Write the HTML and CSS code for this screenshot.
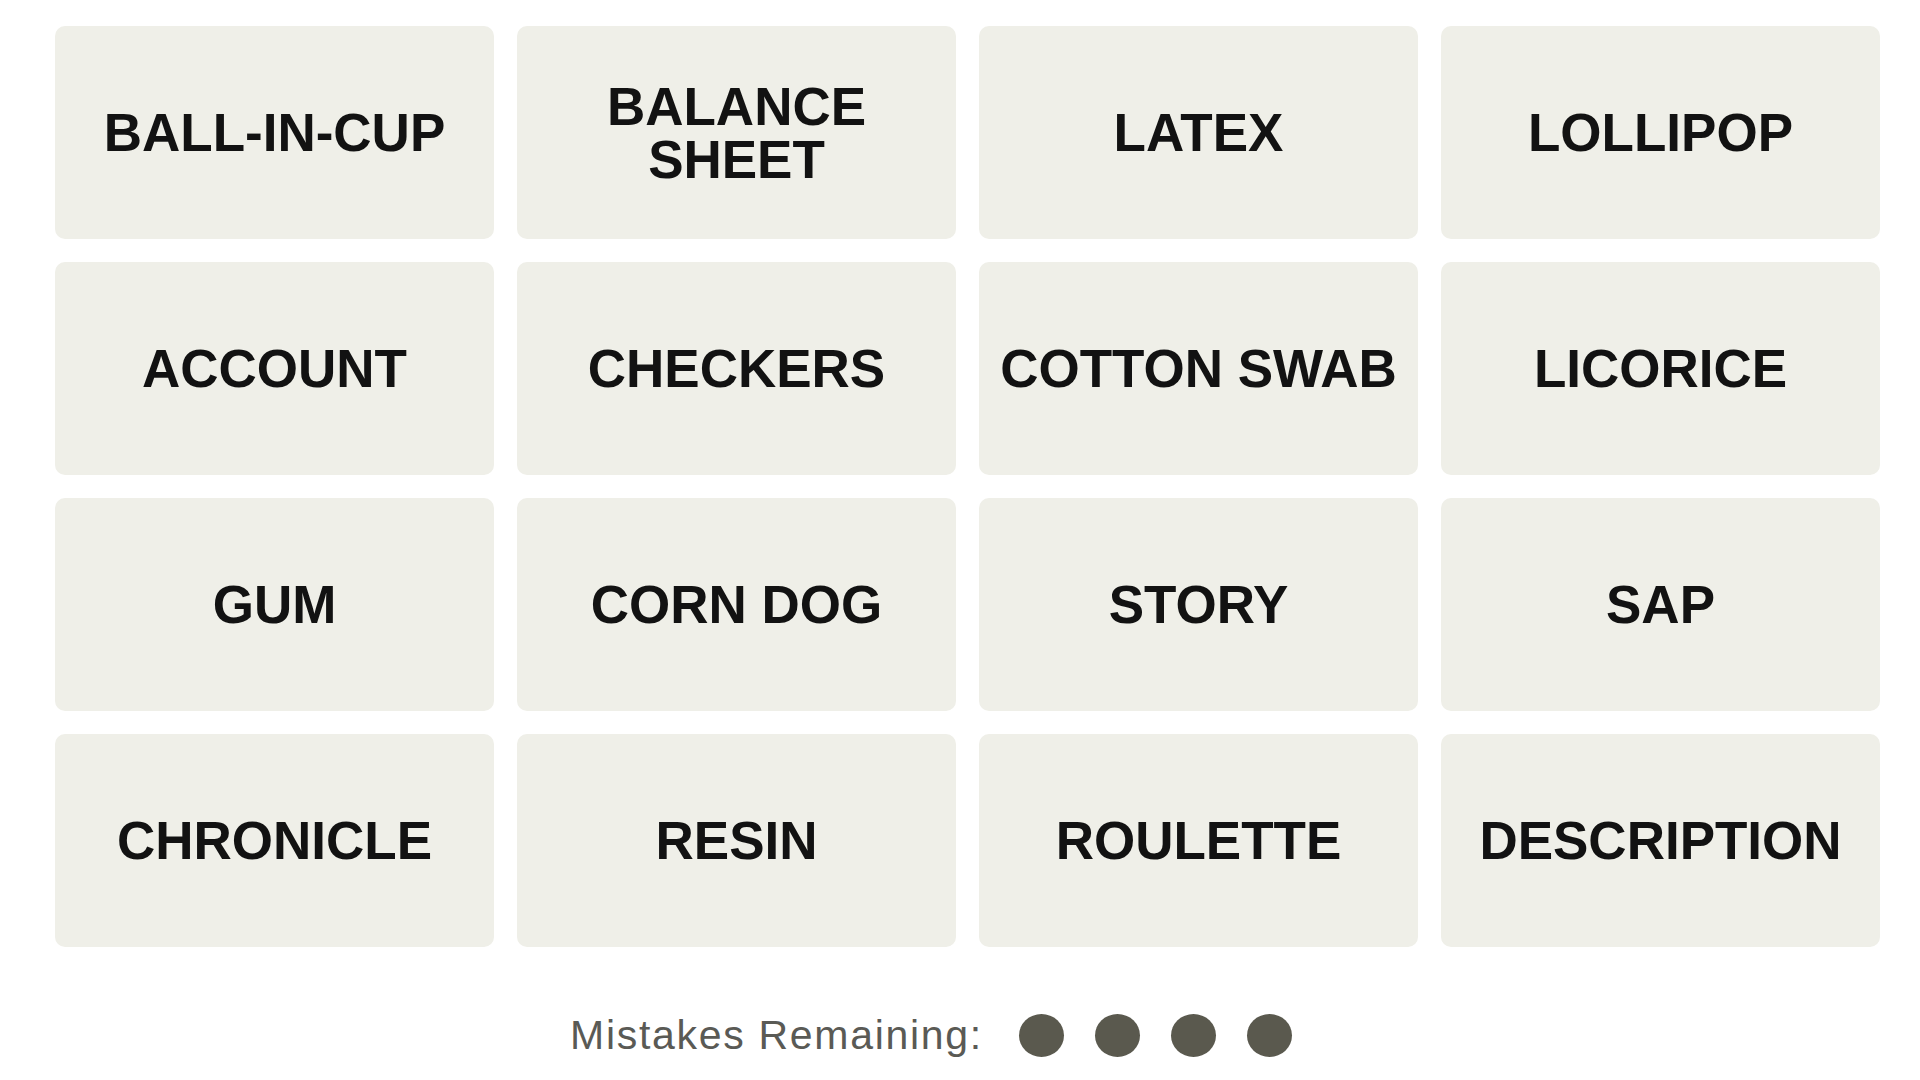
FILE: index.html
```html
<!DOCTYPE html>
<html lang="en">
<head>
<meta charset="utf-8">
<title>Connections</title>
<link rel="stylesheet" href="styles.css">
</head>
<body>
<main class="game">
  <section class="board">
    <div class="tile">BALL-IN-CUP</div>
    <div class="tile">BALANCE SHEET</div>
    <div class="tile">LATEX</div>
    <div class="tile">LOLLIPOP</div>
    <div class="tile">ACCOUNT</div>
    <div class="tile">CHECKERS</div>
    <div class="tile">COTTON SWAB</div>
    <div class="tile">LICORICE</div>
    <div class="tile">GUM</div>
    <div class="tile">CORN DOG</div>
    <div class="tile">STORY</div>
    <div class="tile">SAP</div>
    <div class="tile">CHRONICLE</div>
    <div class="tile">RESIN</div>
    <div class="tile">ROULETTE</div>
    <div class="tile">DESCRIPTION</div>
  </section>
  <div class="mistakes">
    <span class="mistakes-label">Mistakes Remaining:</span>
    <span class="dots">
      <span class="dot"></span>
      <span class="dot"></span>
      <span class="dot"></span>
      <span class="dot"></span>
    </span>
  </div>
</main>
</body>
</html>
```

FILE: styles.css
```css
html, body {
  margin: 0;
  padding: 0;
  background: #ffffff;
}

.game {
  width: 1920px;
  height: 1080px;
  box-sizing: border-box;
  padding: 26px 0 0 55px;
  display: flex;
  flex-direction: column;
}

.board {
  display: grid;
  grid-template-columns: repeat(4, 439px);
  grid-auto-rows: 213px;
  column-gap: 23px;
  row-gap: 23px;
}

.tile {
  background: #efefe8;
  border-radius: 10px;
  display: flex;
  align-items: center;
  justify-content: center;
  text-align: center;
  padding: 0 14px;
  font-family: "Liberation Sans", Arial, sans-serif;
  font-weight: 700;
  font-size: 53px;
  line-height: 53px;
  color: #121212;
}

.mistakes {
  display: flex;
  align-items: center;
  justify-content: center;
  margin-top: 66px;
  padding-right: 113px;
  height: 44px;
}

.mistakes-label {
  font-family: "Liberation Sans", Arial, sans-serif;
  font-size: 41px;
  letter-spacing: 1.7px;
  color: #5a5a55;
  margin-right: 36px;
}

.dots {
  display: flex;
  gap: 31px;
}

.dot {
  width: 45px;
  height: 43px;
  border-radius: 50%;
  background: #5a594e;
}
```
